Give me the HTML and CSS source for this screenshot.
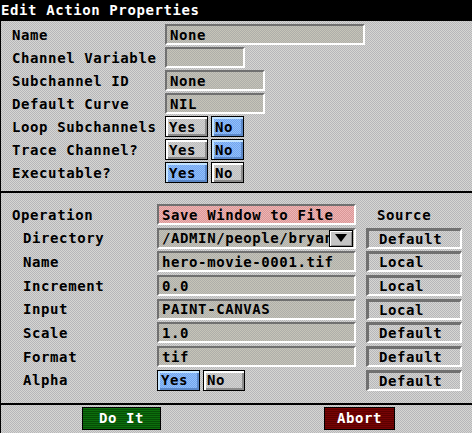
FILE: index.html
```html
<!DOCTYPE html>
<html>
<head>
<meta charset="utf-8">
<link rel="stylesheet" href="styles.css">
</head>
<body>
<div class="window">
  <div class="titlebar">Edit Action Properties</div>
  <div class="top">
    <div class="row"><span class="label">Name</span><span class="field w200">None</span></div>
    <div class="row"><span class="label">Channel Variable</span><span class="field w80"></span></div>
    <div class="row"><span class="label">Subchannel ID</span><span class="field w100">None</span></div>
    <div class="row"><span class="label">Default Curve</span><span class="field w100">NIL</span></div>
    <div class="row"><span class="label">Loop Subchannels</span><span class="toggle"><span class="btn yes">Yes</span><span class="btn no sel">No</span></span></div>
    <div class="row"><span class="label">Trace Channel?</span><span class="toggle"><span class="btn yes">Yes</span><span class="btn no sel">No</span></span></div>
    <div class="row"><span class="label">Executable?</span><span class="toggle"><span class="btn yes sel">Yes</span><span class="btn no">No</span></span></div>
  </div>
  <div class="bottom">
    <div class="brow"><span class="label">Operation</span><span class="field wide pink">Save Window to File</span><span class="srchead">Source</span></div>
    <div class="brow"><span class="label sub">Directory</span><span class="field wide dir"><span class="dirtext">/ADMIN/people/bryan</span><span class="drop"><svg width="14" height="10" viewBox="0 0 14 10"><path d="M1 1 H13 L7 9 Z" fill="#000"/></svg></span></span><span class="src">Default</span></div>
    <div class="brow"><span class="label sub">Name</span><span class="field wide">hero-movie-0001.tif</span><span class="src">Local</span></div>
    <div class="brow"><span class="label sub">Increment</span><span class="field wide">0.0</span><span class="src">Local</span></div>
    <div class="brow"><span class="label sub">Input</span><span class="field wide">PAINT-CANVAS</span><span class="src">Local</span></div>
    <div class="brow"><span class="label sub">Scale</span><span class="field wide">1.0</span><span class="src">Default</span></div>
    <div class="brow"><span class="label sub">Format</span><span class="field wide">tif</span><span class="src">Default</span></div>
    <div class="brow"><span class="label sub">Alpha</span><span class="toggle alpha"><span class="btn yes sel">Yes</span><span class="btn no">No</span></span><span class="src">Default</span></div>
  </div>
  <div class="actions">
    <span class="action doit">Do It</span>
    <span class="action abort">Abort</span>
  </div>
</div>
</body>
</html>
```
FILE: styles.css
```css
html, body {
  margin: 0;
  padding: 0;
}
body {
  width: 472px;
  height: 433px;
  overflow: hidden;
  font-family: "DejaVu Sans Mono", "Liberation Mono", monospace;
  font-weight: bold;
  font-size: 14px;
  letter-spacing: 0.6px;
  color: #000;
  background-color: #c6c6c6;
  background-image: repeating-conic-gradient(#d6d6d2 0 25%, #b6b6ba 0 50%);
  background-size: 2px 2px;
}
.window {
  width: 472px;
  height: 433px;
  box-sizing: border-box;
  border-left: 1px solid #000;
}
.titlebar {
  height: 21px;
  line-height: 21px;
  background: #000;
  color: #fff;
  padding-left: 1px;
  margin-left: -1px;
  white-space: nowrap;
}
.top {
  padding: 3px 0 8px 11px;
  display: flex;
  flex-direction: column;
  gap: 2px;
  border-bottom: 2px solid #000;
}
.row {
  display: flex;
  align-items: center;
  height: 21px;
}
.row .label {
  width: 153px;
  white-space: nowrap;
}
.field {
  display: flex;
  align-items: center;
  box-sizing: border-box;
  height: 21px;
  padding-left: 3px;
  border-top: 2px solid #707070;
  border-left: 2px solid #707070;
  border-bottom: 2px solid #fff;
  border-right: 2px solid #fff;
  background-color: #b9b8b0;
  background-image: repeating-conic-gradient(#c6c4b8 0 25%, #aeaeaa 0 50%);
  background-size: 2px 2px;
  white-space: nowrap;
  overflow: hidden;
}
.w200 { width: 200px; }
.w80 { width: 80px; }
.w100 { width: 100px; }
.toggle {
  display: flex;
  gap: 3px;
  height: 21px;
}
.btn {
  box-sizing: border-box;
  height: 21px;
  display: flex;
  align-items: center;
  padding-left: 3px;
  border: 1px solid #000;
  box-shadow: inset 2px 2px 0 #fff, inset -2px -2px 0 #8c8c8c;
  background-color: #c8c8c8;
  background-image: repeating-conic-gradient(#d2d2d2 0 25%, #bcbcbc 0 50%);
  background-size: 2px 2px;
}
.btn.yes { width: 43px; }
.btn.no { width: 33px; }
.btn.sel {
  box-shadow: inset 2px 2px 0 #c4e4ff, inset -2px -2px 0 #5c88c8;
  background-color: #84b4f4;
  background-image: repeating-conic-gradient(#90c0fc 0 25%, #74a4ec 0 50%);
}
.alpha .btn.yes { width: 43px; }
.alpha .btn.no { width: 42px; }
.bottom {
  padding: 11px 0 12px 11px;
  display: flex;
  flex-direction: column;
  gap: 2.7px;
  border-bottom: 2px solid #000;
}
.brow {
  display: flex;
  align-items: center;
  height: 21px;
}
.brow .label {
  width: 145px;
  white-space: nowrap;
}
.brow .label.sub {
  width: 134px;
  padding-left: 11px;
}
.field.wide {
  width: 199px;
}
.field.pink {
  background-color: #e4a6a6;
  background-image: repeating-conic-gradient(#f0b4b4 0 25%, #d89898 0 50%);
}
.field.dir {
  padding-right: 1px;
}
.dirtext {
  flex: 1;
  overflow: hidden;
  white-space: nowrap;
}
.drop {
  box-sizing: border-box;
  width: 24px;
  height: 17px;
  flex: none;
  border: 1px solid #000;
  box-shadow: inset 1px 1px 0 #fff, inset -1px -1px 0 #8c8c8c;
  background: #c4c4c4;
  display: flex;
  align-items: center;
  justify-content: center;
}
.drop svg { display: block; }
.toggle.alpha { width: 199px; }
.srchead {
  margin-left: 21px;
}
.src {
  box-sizing: border-box;
  margin-left: 10px;
  width: 96px;
  height: 21px;
  display: flex;
  align-items: center;
  padding-left: 10px;
  border-top: 3px solid #707070;
  border-left: 3px solid #707070;
  border-bottom: 2px solid #fff;
  border-right: 2px solid #fff;
}
.actions {
  display: flex;
  padding: 2px 0 0 81px;
  gap: 163px;
}
.action {
  box-sizing: border-box;
  height: 23px;
  display: flex;
  align-items: center;
  justify-content: center;
  border: 1px solid #000;
  color: #fff;
}
.doit {
  width: 79px;
  background-color: #0a640a;
  background-image: repeating-linear-gradient(#0c6e0c 0 1px, #064e06 1px 2px);
}
.abort {
  width: 71px;
  background-color: #6c0000;
  background-image: repeating-linear-gradient(#760404 0 1px, #5c0000 1px 2px);
}
```
